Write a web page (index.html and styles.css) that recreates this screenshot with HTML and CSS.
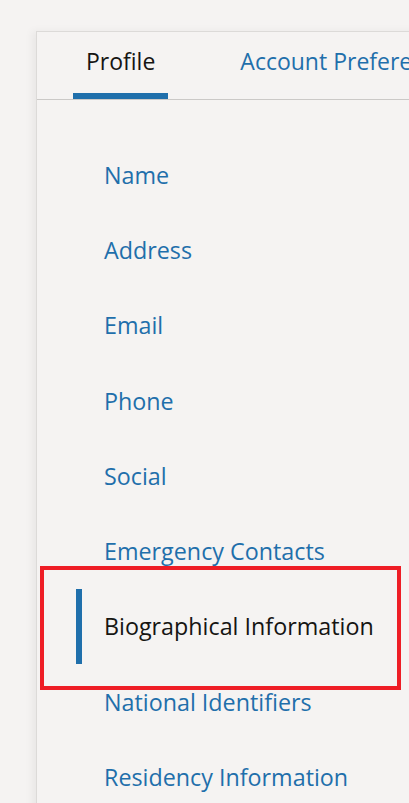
FILE: index.html
```html
<!DOCTYPE html>
<html lang="en">
<head>
    <meta charset="UTF-8">
    <meta name="viewport" content="width=device-width, initial-scale=1.0">
    <title>Me - Profile</title>
    <link rel="stylesheet" href="styles.css">
</head>
<body>
    <div class="panel">
        <div class="tabs">
            <div class="tab active">Profile</div>
            <div class="tab">Account Preferences</div>
        </div>
        <ul class="sections">
            <li class="section">Name</li>
            <li class="section">Address</li>
            <li class="section">Email</li>
            <li class="section">Phone</li>
            <li class="section">Social</li>
            <li class="section">Emergency Contacts</li>
            <li class="section selected">
                Biographical Information
                <span class="callout"></span>
            </li>
            <li class="section">National Identifiers</li>
            <li class="section">Residency Information</li>
        </ul>
    </div>
</body>
</html>
```

FILE: styles.css
```css
html, body {
    margin: 0;
    padding: 0;
    overflow: hidden;
}
body {
    font-family: 'Open Sans', 'Noto Sans', sans-serif;
    background: #f5f3f2;
    color: #161513;
    padding: 31px 0 0 36px;
    height: 803px;
    box-sizing: border-box;
}
.panel {
    width: 600px;
    height: 900px;
    background: #f5f3f2;
    border: 1px solid #dcdad8;
    box-shadow: -4px 0 8px rgba(0, 0, 0, 0.05);
}
.tabs {
    display: flex;
    height: 67px;
    padding-left: 36px;
    border-bottom: 1px solid #cbc9c7;
    white-space: nowrap;
}
.tab {
    display: flex;
    align-items: center;
    padding: 0 13px 3px;
    margin-right: 59px;
    font-size: 23px;
    color: #1f6fab;
    border-bottom: 6px solid transparent;
}
.tab.active {
    color: #161513;
    border-bottom-color: #1f6fab;
}
.sections {
    list-style: none;
    margin: 37px 0 0;
    padding: 0;
}
.section {
    position: relative;
    display: flex;
    align-items: center;
    height: 75.3px;
    margin-left: 39px;
    padding-left: 28px;
    font-size: 23.3px;
    color: #1f6fab;
}
.section.selected {
    color: #161513;
    border-left: 6px solid #1f6fab;
    padding-left: 22px;
}
/* red outline drawn round the chosen section */
.callout {
    position: absolute;
    top: -23px;
    bottom: -26px;
    left: -42px;
    width: 361px;
    box-sizing: border-box;
    border: 4px solid #ee1d25;
}
```
